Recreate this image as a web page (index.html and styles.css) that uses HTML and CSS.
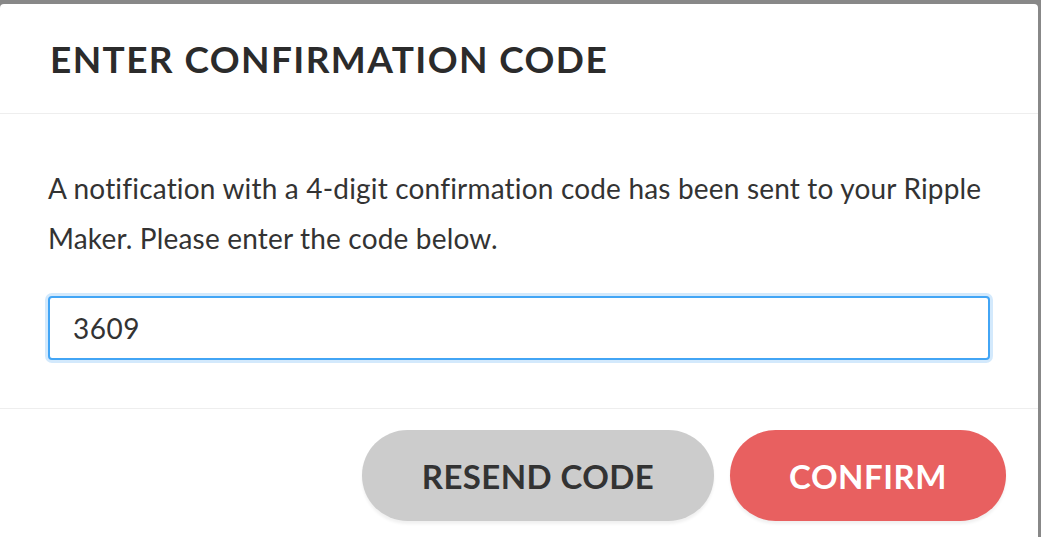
FILE: index.html
```html
<!DOCTYPE html>
<html>
<head>
<meta charset="utf-8">
<link rel="stylesheet" href="styles.css">
</head>
<body>
<div class="modal">
  <div class="modal-header">
    <h1 class="title">ENTER CONFIRMATION CODE</h1>
  </div>
  <div class="modal-body">
    <p class="message">A notification with a 4-digit confirmation code has been sent to your Ripple Maker. Please enter the code below.</p>
    <input class="code-input" type="text" value="3609">
  </div>
  <div class="modal-footer">
    <button class="btn btn-resend">RESEND CODE</button>
    <button class="btn btn-confirm">CONFIRM</button>
  </div>
</div>
</body>
</html>
```

FILE: styles.css
```css
html, body {
  margin: 0;
  padding: 0;
  height: 100%;
}
body {
  background: #888888;
  font-family: Lato, "Liberation Sans", sans-serif;
  overflow: hidden;
}
.modal {
  margin: 4px 3px 0 0;
  background: #ffffff;
  border-radius: 4px 4px 0 0;
  height: 533px;
  box-sizing: border-box;
}
.modal-header {
  height: 109px;
  display: flex;
  align-items: center;
  padding: 0 50px;
  border-bottom: 1px solid #eeeeee;
}
.title {
  margin: 0;
  font-size: 37px;
  font-weight: 700;
  color: #2b2b2b;
  letter-spacing: 1.4px;
}
.modal-body {
  padding: 49px 48px 48px 48px;
}
.message {
  margin: 0;
  font-size: 28px;
  line-height: 50px;
  color: #333333;
  font-weight: 400;
  letter-spacing: 0.18px;
}
.code-input {
  display: block;
  margin-top: 33px;
  width: 100%;
  height: 64px;
  box-sizing: border-box;
  border: 2px solid #42a5f5;
  border-radius: 4px;
  box-shadow: 0 0 0 3px #d3e9fc;
  padding: 0 23px;
  font-family: Lato, "Liberation Sans", sans-serif;
  font-size: 28px;
  color: #333333;
  letter-spacing: 0.5px;
  outline: none;
}
.modal-footer {
  border-top: 1px solid #eeeeee;
  padding: 21px 32px 0 0;
  display: flex;
  justify-content: flex-end;
  gap: 16px;
}
.btn {
  height: 91px;
  border: none;
  border-radius: 46px;
  font-family: Lato, "Liberation Sans", sans-serif;
  font-size: 33px;
  font-weight: 700;
  letter-spacing: 0.4px;
  box-shadow: 0 3px 3px rgba(0, 0, 0, 0.06);
  cursor: pointer;
}
.btn-resend {
  width: 352px;
  background: #cccccc;
  color: #333333;
}
.btn-confirm {
  width: 276px;
  background: #e86060;
  color: #ffffff;
  letter-spacing: 0.5px;
}
```
